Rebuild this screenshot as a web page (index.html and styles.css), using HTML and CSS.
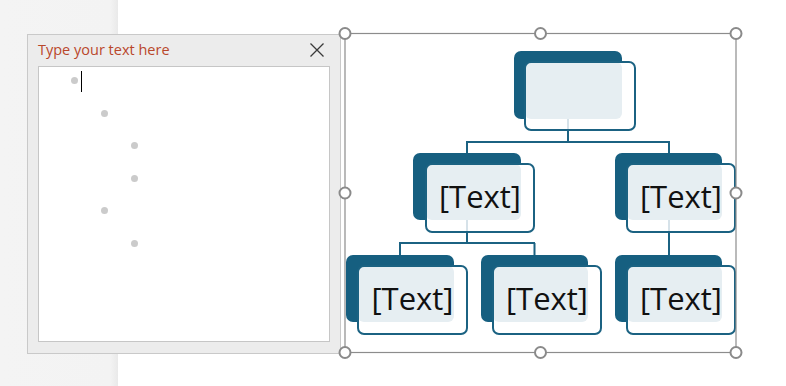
FILE: index.html
```html
<!DOCTYPE html>
<html lang="en">
<head>
<meta charset="utf-8">
<title>SmartArt Text Pane</title>
<link rel="stylesheet" href="styles.css">
</head>
<body>
<div class="app">
  <aside class="strip"></aside>
  <main class="canvas"></main>

  <section class="text-pane">
    <header class="pane-head">
      <span class="pane-title">Type your text here</span>
      <button class="close" aria-label="Close">
        <svg width="14" height="14" viewBox="0 0 14 14"><path d="M0.5 0.5 L13.5 13.5 M13.5 0.5 L0.5 13.5" stroke="#3a3a3a" stroke-width="1.3" fill="none"/></svg>
      </button>
    </header>
    <div class="pane-body">
      <ul class="bullets">
        <li class="lvl1"><span class="dot"></span><span class="caret"></span></li>
        <li class="lvl2"><span class="dot"></span></li>
        <li class="lvl3"><span class="dot"></span></li>
        <li class="lvl3"><span class="dot"></span></li>
        <li class="lvl2"><span class="dot"></span></li>
        <li class="lvl3"><span class="dot"></span></li>
      </ul>
    </div>
  </section>

  <div class="smartart">
    <svg width="420" height="346" viewBox="330 20 420 346">
      <g class="links" stroke="#1b6282" stroke-width="2" fill="none">
        <path d="M568 131 V142 M466 142 H670 M467 142 V153 M669 142 V153"/>
        <path d="M467 233 V243 M399 243 H535 M400 243 V255 M534.5 243 V255"/>
        <path d="M669 233 V255"/>
      </g>

      <!-- top node -->
      <rect x="514" y="51" width="108" height="68" rx="7" fill="#165f80"/>
      <rect x="525" y="62" width="110" height="68" rx="6" fill="#ffffff"/>
      <rect x="525" y="62" width="97" height="57" rx="6" fill="#e6eef2"/>
      <line x1="568" y1="119" x2="568" y2="130" stroke="#c9d9e2" stroke-width="1.5"/>
      <rect x="525" y="62" width="110" height="68" rx="6" fill="none" stroke="#1b6282" stroke-width="2"/>

      <!-- level 2 left -->
      <rect x="413" y="153" width="108" height="67" rx="7" fill="#165f80"/>
      <rect x="426" y="164" width="108" height="68" rx="6" fill="#ffffff"/>
      <rect x="426" y="164" width="95" height="56" rx="6" fill="#e6eef2"/>
      <line x1="467" y1="220" x2="467" y2="232" stroke="#c9d9e2" stroke-width="1.5"/>
      <rect x="426" y="164" width="108" height="68" rx="6" fill="none" stroke="#1b6282" stroke-width="2"/>
      <text x="480" y="208" class="node-text">[Text]</text>

      <!-- level 2 right -->
      <rect x="615" y="153" width="107" height="67" rx="7" fill="#165f80"/>
      <rect x="627" y="164" width="108" height="68" rx="6" fill="#ffffff"/>
      <rect x="627" y="164" width="95" height="56" rx="6" fill="#e6eef2"/>
      <line x1="669" y1="220" x2="669" y2="232" stroke="#c9d9e2" stroke-width="1.5"/>
      <rect x="627" y="164" width="108" height="68" rx="6" fill="none" stroke="#1b6282" stroke-width="2"/>
      <text x="681" y="208" class="node-text">[Text]</text>

      <!-- level 3 a -->
      <rect x="346" y="255" width="108" height="67" rx="7" fill="#165f80"/>
      <rect x="358" y="266" width="109" height="68" rx="6" fill="#ffffff"/>
      <rect x="358" y="266" width="96" height="56" rx="6" fill="#e6eef2"/>
      <rect x="358" y="266" width="109" height="68" rx="6" fill="none" stroke="#1b6282" stroke-width="2"/>
      <text x="412.5" y="309.5" class="node-text">[Text]</text>

      <!-- level 3 b -->
      <rect x="481" y="255" width="107" height="67" rx="7" fill="#165f80"/>
      <rect x="493" y="266" width="108" height="68" rx="6" fill="#ffffff"/>
      <rect x="493" y="266" width="95" height="56" rx="6" fill="#e6eef2"/>
      <rect x="493" y="266" width="108" height="68" rx="6" fill="none" stroke="#1b6282" stroke-width="2"/>
      <text x="547" y="309.5" class="node-text">[Text]</text>

      <!-- level 3 c -->
      <rect x="615" y="255" width="107" height="67" rx="7" fill="#165f80"/>
      <rect x="627" y="266" width="108" height="68" rx="6" fill="#ffffff"/>
      <rect x="627" y="266" width="95" height="56" rx="6" fill="#e6eef2"/>
      <rect x="627" y="266" width="108" height="68" rx="6" fill="none" stroke="#1b6282" stroke-width="2"/>
      <text x="681" y="309.5" class="node-text">[Text]</text>

      <!-- selection frame -->
      <rect x="345" y="33.5" width="391" height="319" fill="none" stroke="#8c8c8c" stroke-width="1.2"/>
      <g fill="#ffffff" stroke="#8a8a8a" stroke-width="2">
        <circle cx="345" cy="33.5" r="5.5"/>
        <circle cx="540.5" cy="33.5" r="5.5"/>
        <circle cx="736" cy="33.5" r="5.5"/>
        <circle cx="345" cy="193" r="5.5"/>
        <circle cx="736" cy="193" r="5.5"/>
        <circle cx="345" cy="352.5" r="5.5"/>
        <circle cx="540.5" cy="352.5" r="5.5"/>
        <circle cx="736" cy="352.5" r="5.5"/>
      </g>
    </svg>
  </div>
</div>
</body>
</html>
```

FILE: styles.css
```css
* { box-sizing: border-box; }

html, body {
  margin: 0;
  padding: 0;
  width: 786px;
  height: 386px;
  overflow: hidden;
  background: #ffffff;
  font-family: "Open Sans", "Noto Sans", "DejaVu Sans", sans-serif;
}

.app {
  position: relative;
  display: flex;
  width: 786px;
  height: 386px;
}

.strip {
  width: 118px;
  flex: 0 0 118px;
  background: linear-gradient(to right, #f4f4f4 0, #f3f3f3 110px, #e9e9e9 118px);
}

.canvas {
  flex: 1;
  background: #ffffff;
}

/* floating text pane */
.text-pane {
  position: absolute;
  left: 27px;
  top: 34px;
  width: 314px;
  height: 320px;
  background: #ececec;
  border: 1px solid #c9c9c9;
  display: flex;
  flex-direction: column;
  padding: 0 10px 11px 10px;
}

.pane-head {
  height: 31px;
  flex: 0 0 31px;
  display: flex;
  align-items: flex-start;
  justify-content: space-between;
  padding-top: 5px;
}

.pane-title {
  font-size: 14.5px;
  line-height: 20px;
  color: #b9472b;
}

.close {
  margin: 3px 6px 0 0;
  padding: 0;
  border: 0;
  background: transparent;
  width: 14px;
  height: 14px;
  display: block;
}

.close svg { display: block; }

.pane-body {
  flex: 1;
  background: #ffffff;
  border: 1px solid #c6c6c6;
}

.bullets {
  list-style: none;
  margin: 0;
  padding: 0;
}

.bullets li {
  height: 32.5px;
  padding-top: 10px;
  display: flex;
  align-items: flex-start;
}

.dot {
  width: 7px;
  height: 7px;
  border-radius: 50%;
  background: #cbcbcb;
  flex: 0 0 7px;
}

.lvl1 .dot { margin-left: 32px; }
.lvl2 .dot { margin-left: 62px; }
.lvl3 .dot { margin-left: 92px; }

.caret {
  width: 1px;
  height: 21px;
  background: #000000;
  margin-left: 3px;
  margin-top: -6px;
}

/* smartart on slide canvas */
.smartart {
  position: absolute;
  left: 330px;
  top: 20px;
  width: 420px;
  height: 346px;
}

.smartart svg { display: block; }

.node-text {
  font-family: "Open Sans", "Noto Sans", sans-serif;
  font-size: 31px;
  fill: #111111;
  text-anchor: middle;
}
```
